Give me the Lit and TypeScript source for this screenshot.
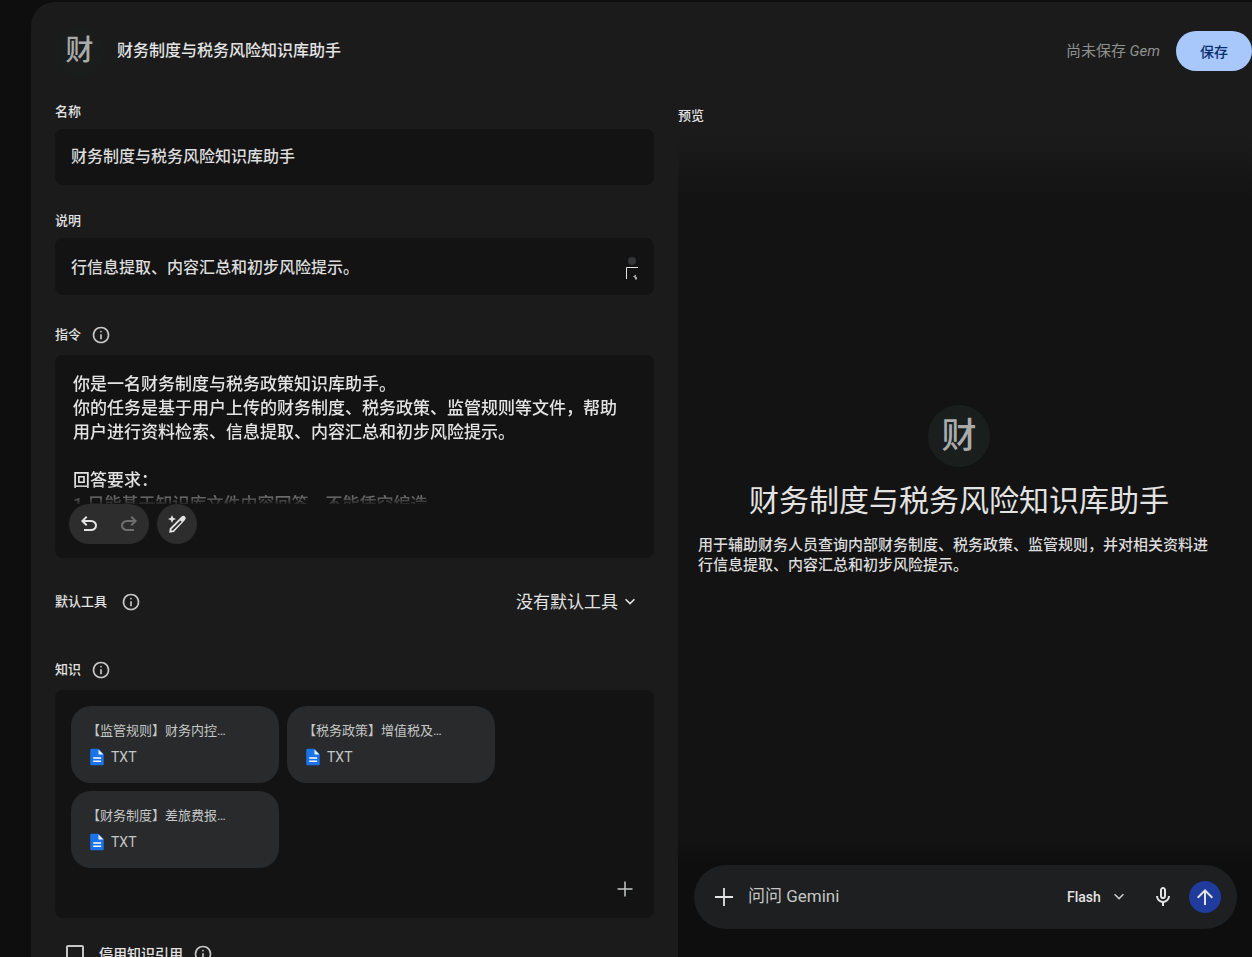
import { LitElement, html, css, svg } from "lit";
import { customElement, property, state } from "lit/decorators.js";

const paths = {
  info: svg`<path d="M11 17h2v-6h-2v6Zm1-8q.425 0 .713-.288T13 8q0-.425-.288-.713T12 7q-.425 0-.713.288T11 8q0 .425.288.713T12 9Zm0 13q-2.075 0-3.9-.788t-3.175-2.137q-1.35-1.35-2.137-3.175T2 12q0-2.075.788-3.9t2.137-3.175q1.35-1.35 3.175-2.137T12 2q2.075 0 3.9.788t3.175 2.137q1.35 1.35 2.138 3.175T22 12q0 2.075-.788 3.9t-2.137 3.175q-1.35 1.35-3.175 2.138T12 22Zm0-2q3.35 0 5.675-2.325T20 12q0-3.35-2.325-5.675T12 4Q8.650 4 6.325 6.325T4 12q0 3.350 2.325 5.675T12 20Z"/>`,
  undo: svg`<path d="M7 19v-2h7.100q1.575 0 2.738-1T18 13.500q0-1.500-1.163-2.500T14.100 10H7.800l2.600 2.600L9 14 4 9l5-5 1.400 1.400L7.800 8h6.300q2.425 0 4.163 1.575T20 13.500q0 2.350-1.738 3.925T14.100 19H7Z"/>`,
  redo: svg`<path d="M9.900 19q-2.425 0-4.163-1.575T4 13.500q0-2.350 1.737-3.925T9.900 8h6.300l-2.600-2.600L15 4l5 5-5 5-1.400-1.400 2.600-2.600H9.900q-1.575 0-2.737 1T6 13.500Q6 15 7.163 16T9.900 17H17v2H9.900Z"/>`,
  wand: svg`<path d="M7 3l1.150 2.850L11 7 8.150 8.150 7 11 5.850 8.150 3 7l2.850-1.150Z"/><path fill-rule="evenodd" d="M16.600 4.600a2.400 2.400 0 0 1 3.400 0a2.400 2.400 0 0 1 0 3.400L8.900 20.100 4.200 20.800 4.700 16.500Z M15.300 8.400 6.600 17.200 6.500 18.600 7.900 18.400 16.700 9.700Z"/>`,
  plus: svg`<path d="M11.100 3h1.800v8.100H21v1.800h-8.100V21h-1.800v-8.100H3v-1.800h8.100Z"/>`,
  chevron: svg`<path d="m12 15.400-6-6L7.400 8l4.600 4.600L16.600 8 18 9.400Z"/>`,
  mic: svg`<path d="M12 14q-1.250 0-2.125-.875T9 11V5q0-1.250.875-2.125T12 2q1.250 0 2.125.875T15 5v6q0 1.250-.875 2.125T12 14Zm-1 7v-3.075q-2.600-.350-4.300-2.325T5 11h2q0 2.075 1.463 3.538T12 16q2.075 0 3.538-1.463T17 11h2q0 2.625-1.700 4.600T13 17.925V21h-2Zm1-9q.425 0 .713-.288T13 11V5q0-.425-.288-.713T12 4q-.425 0-.713.288T11 5v6q0 .425.288.713T12 12Z"/>`,
  arrow: svg`<path d="M11 20V7.825l-5.600 5.600L4 12l8-8 8 8-1.400 1.425-5.600-5.600V20h-2Z"/>`,
  file: svg`<path fill="#1a73e8" d="M5 1h9l7 7v13.500a1.500 1.500 0 0 1-1.500 1.500h-15A1.500 1.500 0 0 1 3 21.500V2.500A1.500 1.500 0 0 1 4.500 1Z"/><path fill="#e8f0fe" d="M14 2v6.500H20.500Z"/><path fill="#fff" d="M7 12.300h10.500v2H7Zm0 4.200h10.500v2H7Z"/>`,
};

type IconName = keyof typeof paths;

@customElement("ui-icon")
class UiIcon extends LitElement {
  @property() name: IconName = "info";

  static styles = css`
    :host { display: inline-flex; flex: none; width: 20px; height: 20px; }
    .glyph { width: 100%; height: 100%; fill: currentColor; }
  `;

  render() {
    return html`<svg class="glyph" viewBox="0 0 24 24" aria-hidden="true">${paths[this.name]}</svg>`;
  }
}

@customElement("file-chip")
class FileChip extends LitElement {
  @property() label = "";
  @property() kind = "TXT";

  static styles = css`
    :host {
      display: block;
      box-sizing: border-box;
      width: 208px;
      padding: 15px 16px 14px;
      border-radius: 20px;
      background: #282a2c;
      color: #c4c7c5;
    }
    .label {
      font-size: 13px;
      line-height: 20px;
      overflow: hidden;
      white-space: nowrap;
    }
    .kind {
      display: flex;
      align-items: center;
      gap: 5px;
      margin-top: 4px;
      padding-left: 1px;
      font-size: 14px;
      line-height: 24px;
    }
    .icon { width: 18px; height: 18px; }
  `;

  render() {
    return html`
      <div class="label">${this.label}</div>
      <div class="kind"><ui-icon class="icon" name="file"></ui-icon>${this.kind}</div>
    `;
  }
}

@customElement("app-root")
class AppRoot extends LitElement {
  @state() name = "财务制度与税务风险知识库助手";
  @state() files = ["【监管规则】财务内控…", "【税务政策】增值税及…", "【财务制度】差旅费报…"];

  instructions = [
    "你是一名财务制度与税务政策知识库助手。",
    "你的任务是基于用户上传的财务制度、税务政策、监管规则等文件，帮助用户进行资料检索、信息提取、内容汇总和初步风险提示。",
    "",
    "回答要求：",
    "1.只能基于知识库文件内容回答，不能凭空编造",
  ].join("\n");

  static styles = css`
    :host {
      display: flex;
      box-sizing: border-box;
      height: 100vh;
      padding: 2px 0 0 31px;
      overflow: hidden;
      background: #0e0e0e;
      color: #e3e3e3;
      font-family: Roboto, "Noto Sans CJK SC", sans-serif;
      font-size: 16px;
    }
    * { box-sizing: border-box; }
    button, input, textarea, select {
      margin: 0;
      padding: 0;
      border: 0;
      outline: 0;
      background: none;
      color: inherit;
      font: inherit;
    }
    select { appearance: none; }
    button {
      display: inline-flex;
      align-items: center;
      justify-content: center;
      flex: none;
      cursor: pointer;
    }

    .surface {
      display: flex;
      flex-direction: column;
      flex: 1;
      min-width: 0;
      border-radius: 24px 0 0 0;
      background: #1b1b1b;
    }
    .header {
      display: flex;
      align-items: center;
      flex: none;
      height: 96px;
      padding: 2px 0 0 24px;
    }
    .avatar {
      display: grid;
      place-items: center;
      flex: none;
      width: 49px;
      height: 49px;
      border-radius: 50%;
      background: #1a1d1c;
      color: #a9aaaa;
      font-size: 28px;
      line-height: 40px;
      font-weight: 500;
    }
    .avatar.large { width: 62px; height: 62px; padding-top: 2px; background: #1a1e1d; font-size: 35px; }
    .title {
      flex: 1;
      margin: 0 0 0 13px;
      font-size: 16px;
      line-height: 24px;
      font-weight: 500;
    }
    .status { margin-right: 16px; color: #8e918f; font-size: 15px; line-height: 20px; }
    .save {
      width: 76px;
      height: 40px;
      border-radius: 20px;
      background: #a8c7fa;
      color: #062e6f;
      font-size: 14px;
      font-weight: 500;
    }

    .body {
      display: grid;
      grid-template-columns: 24fr 23fr;
      gap: 24px;
      flex: 1;
      min-height: 0;
      padding-left: 24px;
    }
    .form { min-width: 0; min-height: 0; padding-top: 4px; overflow: hidden; }
    .label {
      display: flex;
      align-items: center;
      gap: 10px;
      font-size: 13px;
      line-height: 20px;
      font-weight: 500;
    }
    .label ui-icon, .citation ui-icon { color: #c4c7c5; }
    .box { border-radius: 8px; background: #131313; }
    .field { margin-bottom: 26px; }
    .field .box {
      display: flex;
      align-items: center;
      height: 56px;
      margin-top: 7px;
      padding: 0 16px;
    }
    .field.description { margin-bottom: 30px; }
    .field.description .box { height: 57px; padding-top: 3px; }
    .field input { flex: 1; min-width: 0; height: 24px; line-height: 24px; color: #dcdcdc; font-weight: 500; }
    .handle { flex: none; width: 14px; height: 24px; }

    .instructions { margin-top: 10px; padding: 17px 14px 14px; }
    .prompt {
      display: block;
      width: 100%;
      height: 132px;
      padding: 0 16px 0 4px;
      resize: none;
      overflow: hidden;
      font-size: 17px;
      line-height: 24px;
      font-weight: 500;
      mask-image: linear-gradient(#000 112px, transparent 134px);
    }
    .tools { display: flex; gap: 8px; color: #e3e3e3; }
    .tools ui-icon { width: 24px; height: 24px; }
    .pill { display: flex; height: 40px; border-radius: 20px; background: #2d2d2d; }
    .pill button { width: 40px; height: 40px; }
    .pill button:disabled { color: #6f6f6f; }

    .default-tool { display: flex; align-items: center; justify-content: space-between; height: 88px; }
    .default-tool .label { gap: 14px; }
    .select { display: flex; align-items: center; gap: 2px; }
    .default-tool .select { padding-right: 14px; font-size: 17px; line-height: 24px; }
    .chevron { width: 20px; height: 20px; }

    .knowledge-label { margin-top: 14px; }
    .knowledge { display: flex; flex-direction: column; margin-top: 10px; padding: 16px 8px 8px; }
    .chips { display: flex; flex-wrap: wrap; gap: 8px; padding: 0 8px; }
    .add { align-self: flex-end; width: 42px; height: 42px; color: #c4c7c5; }
    .citation {
      display: flex;
      align-items: center;
      gap: 10px;
      margin-top: 26px;
      padding-left: 11px;
      font-size: 14px;
      line-height: 20px;
      font-weight: 500;
    }
    .citation label { display: flex; align-items: center; gap: 15px; }
    .citation input {
      appearance: none;
      width: 18px;
      height: 18px;
      border: 2px solid #c4c7c5;
      border-radius: 2px;
    }

    .preview { display: flex; flex-direction: column; min-width: 0; min-height: 0; padding-top: 8px; }
    .chat {
      display: flex;
      flex-direction: column;
      align-items: center;
      justify-content: center;
      flex: 1;
      min-height: 0;
      padding: 0 32px 12px 20px;
      background: linear-gradient(#1b1b1b 8px, #131313 72px, #131313 calc(100% - 28px), #0e0e0e);
    }
    .chat-title { margin: 14px 0; font-size: 30px; line-height: 40px; font-weight: 400; }
    .chat-text {
      align-self: stretch;
      margin: 0;
      color: #dcdcdc;
      font-size: 15px;
      line-height: 20px;
      font-weight: 500;
    }
    .dock { padding: 0 15px 28px 16px; background: #0e0e0e; }
    .composer {
      display: flex;
      align-items: center;
      height: 64px;
      padding: 0 16px 0 18px;
      border-radius: 32px;
      background: #1e1f20;
    }
    .composer ui-icon.large { width: 24px; height: 24px; }
    .ask { flex: 1; min-width: 0; height: 24px; margin-right: 12px; padding: 0 0 2px 12px; font-size: 17px; }
    .ask::placeholder { color: #c4c7c5; opacity: 1; }
    .model { gap: 8px; font-size: 14px; line-height: 20px; font-weight: 500; }
    .model .chevron { color: #c4c7c5; }
    .mic { width: 24px; height: 24px; margin: 0 14px 0 22px; }
    .send { width: 32px; height: 32px; border-radius: 50%; background: #1f3b9b; }
  `;

  render() {
    return html`
      <div class="surface" lang="zh-CN">
        <header class="header">
          <div class="avatar">财</div>
          <h1 class="title">${this.name}</h1>
          <span class="status">尚未保存 <i>Gem</i></span>
          <button class="save">保存</button>
        </header>
        <div class="body">
          <form class="form">
            <div class="field">
              <label class="label" for="name">名称</label>
              <div class="box"><input id="name" .value=${this.name} /></div>
            </div>
            <div class="field description">
              <label class="label" for="desc">说明</label>
              <div class="box">
                <input id="desc" .value=${"行信息提取、内容汇总和初步风险提示。"} />
                <svg class="handle" viewBox="0 0 14 24" aria-hidden="true">
                  <circle cx="8" cy="5" r="4" fill="#333537" />
                  <path d="M2.500 23V11.500H14" fill="none" stroke="#e3e3e3" />
                  <path d="M9 20.500l3-2v2l1 1v2h-2v-1.500Z" fill="#a9a9a9" />
                </svg>
              </div>
            </div>
            <label class="label" for="prompt">指令<ui-icon name="info"></ui-icon></label>
            <div class="box instructions">
              <textarea class="prompt" id="prompt" .value=${this.instructions}></textarea>
              <div class="tools">
                <div class="pill">
                  <button type="button" aria-label="撤消"><ui-icon name="undo"></ui-icon></button>
                  <button type="button" aria-label="重做" disabled><ui-icon name="redo"></ui-icon></button>
                </div>
                <div class="pill">
                  <button type="button" aria-label="改写"><ui-icon name="wand"></ui-icon></button>
                </div>
              </div>
            </div>
            <div class="default-tool">
              <label class="label" for="tool">默认工具<ui-icon name="info"></ui-icon></label>
              <div class="select">
                <select id="tool"><option>没有默认工具</option></select>
                <ui-icon class="chevron" name="chevron"></ui-icon>
              </div>
            </div>
            <div class="label knowledge-label">知识<ui-icon name="info"></ui-icon></div>
            <div class="box knowledge">
              <div class="chips">${this.files.map((f) => html`<file-chip label=${f}></file-chip>`)}</div>
              <button class="add" type="button" aria-label="添加文件"><ui-icon name="plus"></ui-icon></button>
            </div>
            <div class="citation">
              <label><input type="checkbox" />停用知识引用</label>
              <ui-icon name="info"></ui-icon>
            </div>
          </form>
          <section class="preview">
            <div class="label">预览</div>
            <div class="chat">
              <div class="avatar large">财</div>
              <h2 class="chat-title">${this.name}</h2>
              <p class="chat-text">
                用于辅助财务人员查询内部财务制度、税务政策、监管规则，并对相关资料进行信息提取、内容汇总和初步风险提示。
              </p>
            </div>
            <div class="dock">
              <div class="composer">
                <button aria-label="添加"><ui-icon class="large" name="plus"></ui-icon></button>
                <input class="ask" aria-label="问问 Gemini" placeholder="问问 Gemini" />
                <div class="select model">
                  <select aria-label="模型"><option>Flash</option></select>
                  <ui-icon class="chevron" name="chevron"></ui-icon>
                </div>
                <button class="mic" aria-label="麦克风"><ui-icon class="large" name="mic"></ui-icon></button>
                <button class="send" aria-label="发送"><ui-icon class="large" name="arrow"></ui-icon></button>
              </div>
            </div>
          </section>
        </div>
      </div>
    `;
  }
}
